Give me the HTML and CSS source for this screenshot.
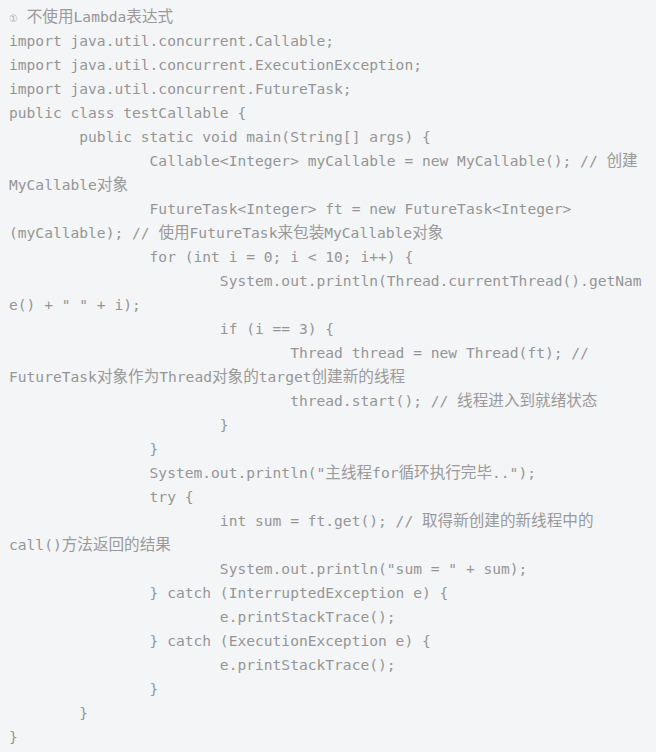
FILE: index.html
```html
<!DOCTYPE html>
<html lang="zh-CN">
<head>
<meta charset="utf-8">
<title>testCallable</title>
<link rel="stylesheet" href="styles.css">
</head>
<body>
<div class="block">
<div class="code">
<div class="ln"><span class="num">①</span> <span class="zh">不使用</span>Lambda<span class="zh">表达式</span></div>
<div class="ln">import java.util.concurrent.Callable;</div>
<div class="ln">import java.util.concurrent.ExecutionException;</div>
<div class="ln">import java.util.concurrent.FutureTask;</div>
<div class="ln">public class testCallable {</div>
<div class="ln">        public static void main(String[] args) {</div>
<div class="ln">                Callable&lt;Integer&gt; myCallable = new MyCallable(); // <span class="zh">创建</span></div>
<div class="ln">MyCallable<span class="zh">对象</span></div>
<div class="ln">                FutureTask&lt;Integer&gt; ft = new FutureTask&lt;Integer&gt;</div>
<div class="ln">(myCallable); // <span class="zh">使用</span>FutureTask<span class="zh">来包装</span>MyCallable<span class="zh">对象</span></div>
<div class="ln">                for (int i = 0; i &lt; 10; i++) {</div>
<div class="ln">                        System.out.println(Thread.currentThread().getNam</div>
<div class="ln">e() + " " + i);</div>
<div class="ln">                        if (i == 3) {</div>
<div class="ln">                                Thread thread = new Thread(ft); //</div>
<div class="ln">FutureTask<span class="zh">对象作为</span>Thread<span class="zh">对象的</span>target<span class="zh">创建新的线程</span></div>
<div class="ln">                                thread.start(); // <span class="zh">线程进入到就绪状态</span></div>
<div class="ln">                        }</div>
<div class="ln">                }</div>
<div class="ln">                System.out.println("<span class="zh">主线程</span>for<span class="zh">循环执行完毕</span>..");</div>
<div class="ln">                try {</div>
<div class="ln">                        int sum = ft.get(); // <span class="zh">取得新创建的新线程中的</span></div>
<div class="ln">call()<span class="zh">方法返回的结果</span></div>
<div class="ln">                        System.out.println("sum = " + sum);</div>
<div class="ln">                } catch (InterruptedException e) {</div>
<div class="ln">                        e.printStackTrace();</div>
<div class="ln">                } catch (ExecutionException e) {</div>
<div class="ln">                        e.printStackTrace();</div>
<div class="ln">                }</div>
<div class="ln">        }</div>
<div class="ln">}</div>
</div>
</div>
</body>
</html>
```
FILE: styles.css
```css
html, body {
  margin: 0;
  padding: 0;
  background: #f4f5f7;
}
.block {
  background: #f4f5f7;
  padding: 5px 9px 3px 9px;
  min-height: 744px;
}
.code {
  font-family: "DejaVu Sans Mono", "Liberation Mono", "Noto Sans CJK SC", monospace;
  font-size: 14.6px;
  color: #959595;
}
.ln {
  height: 24px;
  line-height: 24px;
  white-space: pre;
}
.zh {
  font-family: "Noto Sans CJK SC", sans-serif;
  font-size: 15.6px;
  line-height: 1;
  color: #9a9a9a;
}
.num {
  font-family: "DejaVu Sans", sans-serif;
  font-size: 10px;
  line-height: 1;
  color: #aaaaaa;
}
```
